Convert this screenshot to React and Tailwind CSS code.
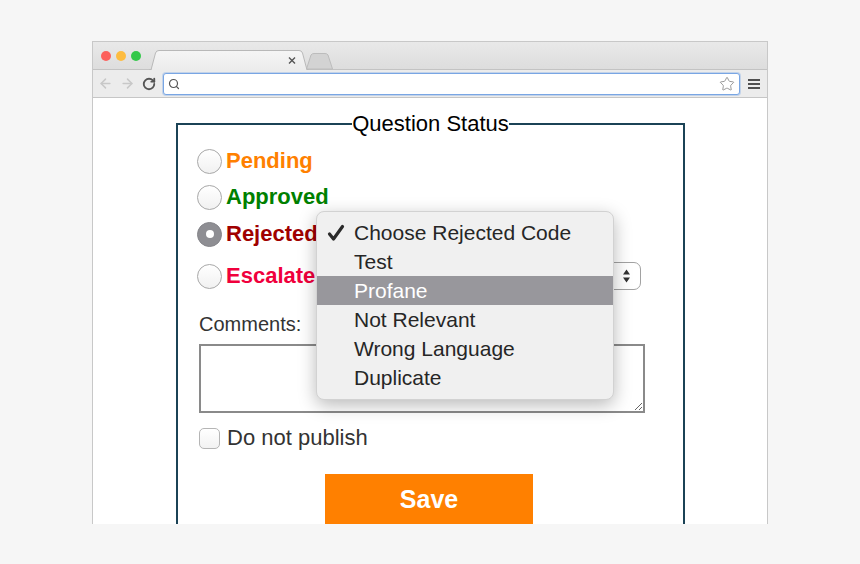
import React from "react";
import { ArrowLeft, ArrowRight, RotateCw, Search, Star } from "lucide-react";

const statuses = [
  { label: "Pending", color: "text-[#ff8000]", row: "h-[36px]" },
  { label: "Approved", color: "text-[#008000]", row: "h-[36px]" },
  { label: "Rejected", color: "text-[#a00000]", row: "h-[38px]", checked: true },
  { label: "Escalate", color: "text-[#f0003c]", row: "h-[46px]", select: true },
];

const codes = ["Choose Rejected Code", "Test", "Profane", "Not Relevant", "Wrong Language", "Duplicate"];

function Radio({ checked }) {
  if (checked) {
    return (
      <div className="w-[25px] h-[25px] rounded-full bg-[#8e8e93] border border-[#85858a] flex items-center justify-center shrink-0">
        <div className="w-[8px] h-[8px] rounded-full bg-white" />
      </div>
    );
  }
  return (
    <div className="w-[25px] h-[25px] rounded-full border border-[#a8a8a8] bg-gradient-to-b from-white to-[#f1f1f1] shrink-0" />
  );
}

function TabStrip() {
  return (
    <div className="shrink-0 flex items-center h-[28px] bg-gradient-to-b from-[#e9e9e9] to-[#dddddd] border-b border-[#c3c3c3]">
      <div className="flex items-center gap-[5px] ml-[8px]">
        <div className="w-[10px] h-[10px] rounded-full bg-[#fc605c]" />
        <div className="w-[10px] h-[10px] rounded-full bg-[#fdbc40]" />
        <div className="w-[10px] h-[10px] rounded-full bg-[#34c84a]" />
      </div>
      <svg width="190" height="20" viewBox="0 0 190 20" className="self-end -mb-px ml-[6px]">
        <path d="M159.5 19 L164 5 Q165 3.5 167 3.5 L178 3.5 Q180 3.5 181 5 L185.5 19 Z" fill="#d3d3d3" stroke="#bcbcbc" />
        <path d="M2 20 L4 20 L8.5 3 Q9.3 0.5 12 0.5 L152 0.5 Q154.7 0.5 155.5 3 L160 20 L162 20" fill="url(#tab)" stroke="#b8b8b8" />
        <defs>
          <linearGradient id="tab" x1="0" y1="0" x2="0" y2="1">
            <stop offset="0" stopColor="#f5f5f5" />
            <stop offset="1" stopColor="#ececec" />
          </linearGradient>
        </defs>
        <path d="M142 7.5 L148 13.5 M148 7.5 L142 13.5" stroke="#555" strokeWidth="1.4" />
      </svg>
    </div>
  );
}

function Toolbar() {
  return (
    <div className="shrink-0 flex items-center h-[28px] bg-[#ececec] border-b border-[#c6c6c6]">
      <div className="w-[24px] flex justify-center">
        <ArrowLeft size={15} strokeWidth={2.4} color="#c8c8c8" />
      </div>
      <div className="w-[20px] flex justify-center">
        <ArrowRight size={15} strokeWidth={2.4} color="#c8c8c8" />
      </div>
      <div className="w-[24px] flex justify-center">
        <RotateCw size={14} strokeWidth={3.2} color="#555" />
      </div>
      <div className="ml-[2px] w-[577px] h-[22px] bg-white border border-[#79a6e4] rounded-[3px] flex items-center px-[4px] shadow-[0_0_0_1px_rgba(121,166,228,0.35)]">
        <Search size={12} strokeWidth={2.4} color="#555" />
        <div className="flex-1" />
        <Star size={16} strokeWidth={1.3} color="#8a8a8a" />
      </div>
      <div className="ml-[8px] flex flex-col gap-[2px]">
        <div className="w-[12px] h-[2px] bg-[#4f4f4f]" />
        <div className="w-[12px] h-[2px] bg-[#4f4f4f]" />
        <div className="w-[12px] h-[2px] bg-[#4f4f4f]" />
      </div>
    </div>
  );
}

function RejectMenu() {
  return (
    <div className="absolute left-[223px] top-[113px] w-[298px] h-[189px] bg-[#f0f0f0] rounded-[8px] border border-[#d2d2d2] shadow-[0_5px_18px_rgba(0,0,0,0.28)] pt-[6px] text-[21px] text-[#262626]">
      {codes.map((c, i) => (
        <div
          key={c}
          className={
            i === 2
              ? "relative h-[29px] flex items-center pl-[37px] bg-[#98979c] text-white"
              : "relative h-[29px] flex items-center pl-[37px]"
          }
        >
          {i === 0 && (
            <svg width="18" height="18" viewBox="0 0 18 18" className="absolute left-[10px] top-[6px]">
              <path d="M2.5 10 L6.5 15 L15.5 2.5" fill="none" stroke="#2a2a2a" strokeWidth="3.2" strokeLinecap="round" strokeLinejoin="round" />
            </svg>
          )}
          {c}
        </div>
      ))}
    </div>
  );
}

export default function App() {
  return (
    <div className="w-[860px] h-[564px] bg-[#f6f6f6] pt-[41px] pl-[92px] overflow-hidden font-['Liberation_Sans',Arial,sans-serif]">
      <div className="w-[676px] h-[483px] border-x border-t border-[#c8c8c8] bg-white flex flex-col overflow-hidden">
        <TabStrip />
        <Toolbar />
        <div className="relative flex-1">
          <fieldset className="ml-[83px] mt-[13px] w-[509px] border-2 border-[#1b4356] pt-[6px] pb-[24px]">
            <legend className="mx-auto px-0 text-[22px] leading-[26px] text-black">Question Status</legend>
            <div className="pl-[19px]">
              {statuses.map((s) => (
                <div key={s.label} className={"flex items-center " + s.row}>
                  <Radio checked={s.checked} />
                  <span className={"ml-[4px] text-[22px] font-bold leading-[26px] " + s.color}>{s.label}</span>
                  {s.select && (
                    <div className="ml-auto mr-[42px] w-[316px] h-[28px] border border-[#a2a2a2] rounded-[7px] bg-white flex items-center justify-end pr-[9px]">
                      <svg width="9" height="16" viewBox="0 0 9 16">
                        <path d="M4.5 1.5 L8 6.5 L1 6.5 Z M4.5 14.5 L8 9.5 L1 9.5 Z" fill="#333" />
                      </svg>
                    </div>
                  )}
                </div>
              ))}
              <div className="ml-[2px] mt-[13px] text-[20px] leading-[24px] text-[#333]">Comments:</div>
              <textarea className="ml-[2px] mt-[8px] block w-[446px] h-[69px] border-2 border-[#8a8a8a] bg-white outline-none" />
              <div className="ml-[2px] mt-[13px] h-[24px] flex items-center">
                <div className="w-[21px] h-[21px] rounded-[5px] border border-[#b5b5b5] bg-gradient-to-b from-white to-[#f2f2f2]" />
                <span className="ml-[7px] text-[22px] leading-[26px] text-[#333]">Do not publish</span>
              </div>
              <button className="block mx-auto mt-[24px] -translate-x-[11px] w-[208px] h-[52px] bg-[#ff8000] text-white text-[25px] font-bold">
                Save
              </button>
            </div>
          </fieldset>
          <RejectMenu />
        </div>
      </div>
    </div>
  );
}
